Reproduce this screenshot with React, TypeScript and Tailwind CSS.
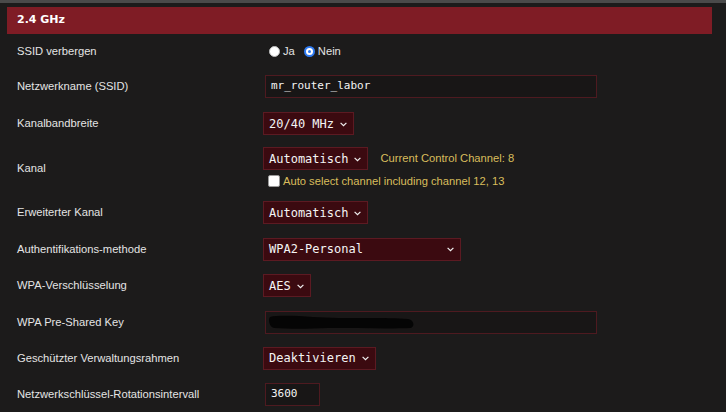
import React from "react";

const mono = { fontFamily: '"DejaVu Sans Mono", "Liberation Mono", monospace' };

function Chevron() {
  return (
    <svg width="7" height="5" viewBox="0 0 7 5" className="ml-[6px] mt-[1px] shrink-0">
      <polyline points="0.6,0.8 3.5,3.7 6.4,0.8" fill="none" stroke="#f2f2f2" strokeWidth="1.2" />
    </svg>
  );
}

function Select({ value, wide }: { value: string; wide?: boolean }) {
  return (
    <div
      className={
        "h-[23px] border border-[#5c1a22] bg-[#3b0a10] flex items-center pl-[5px] pr-[6px] text-[12px] text-[#f4f4f4] " +
        (wide ? "w-[198px] justify-between pr-[5px]" : "")
      }
      style={mono}
    >
      <span className="whitespace-pre leading-none">{value}</span>
      <Chevron />
    </div>
  );
}

function TextInput({ children, w }: { children: React.ReactNode; w: string }) {
  return (
    <div
      className={"ml-[2px] h-[23px] border border-[#4e1a20] bg-[#181616] flex items-center pl-[5px] text-[11px] text-[#f4f4f4] " + w}
      style={mono}
    >
      {children}
    </div>
  );
}

function Row({ label, h, children, top }: { label: string; h: string; children: React.ReactNode; top?: boolean }) {
  return (
    <div className={"flex " + h}>
      <div className="w-[256px] pl-[10px] flex items-center text-[11.2px] text-[#e4e4e4]">{label}</div>
      <div className={"flex " + (top ? "flex-col pt-[5px]" : "items-center")}>{children}</div>
    </div>
  );
}

export default function App() {
  return (
    <div
      className="w-[726px] h-[412px] overflow-hidden bg-[#1c1b1b]"
      style={{ fontFamily: '"Liberation Sans", Arial, sans-serif' }}
    >
      <div className="h-[3px] bg-[#4a4a4a]" />
      <div className="pl-[7px] pt-[4px]">
        <div
          className="h-[27px] w-[705px] bg-[#7f1c25] flex items-center pl-[10px] text-[11px] font-bold text-white"
          style={{ fontFamily: '"DejaVu Sans", Verdana, sans-serif' }}
        >
          2.4 GHz
        </div>

        <Row label="SSID verbergen" h="h-[34px]">
          <span className="ml-[6px] w-[11px] h-[11px] rounded-full bg-white border border-[#bdbdbd]" />
          <span className="ml-[3px] text-[11.2px] text-[#e4e4e4]">Ja</span>
          <span className="ml-[9px] w-[11px] h-[11px] rounded-full bg-white border-[2px] border-[#2f7bf2] flex items-center justify-center">
            <span className="w-[3px] h-[3px] rounded-full bg-[#2f7bf2]" />
          </span>
          <span className="ml-[3px] text-[11.2px] text-[#e4e4e4]">Nein</span>
        </Row>

        <Row label="Netzwerkname (SSID)" h="h-[37px]">
          <TextInput w="w-[332px]">mr_router_labor</TextInput>
        </Row>

        <Row label="Kanalbandbreite" h="h-[37px]">
          <Select value="20/40 MHz" />
        </Row>

        <Row label="Kanal" h="h-[52px]" top>
          <div className="flex items-center">
            <Select value="Automatisch" />
            <span className="ml-[12px] text-[11.2px] text-[#d9bd5c]">Current Control Channel: 8</span>
          </div>
          <div className="mt-[4px] h-[14px] flex items-center">
            <span className="ml-[5px] w-[12px] h-[12px] bg-white rounded-[2px] border border-[#9a9a9a]" />
            <span className="ml-[3px] text-[11.2px] text-[#d9bd5c]">Auto select channel including channel 12, 13</span>
          </div>
        </Row>

        <Row label="Erweiterter Kanal" h="h-[37px]">
          <Select value="Automatisch" />
        </Row>

        <Row label="Authentifikations-methode" h="h-[36px]">
          <Select value="WPA2-Personal" wide />
        </Row>

        <Row label="WPA-Verschlüsselung" h="h-[37px]">
          <Select value="AES" />
        </Row>

        <Row label="WPA Pre-Shared Key" h="h-[36px]">
          <TextInput w="w-[332px]">
            <svg width="148" height="18" viewBox="0 0 148 18" className="-ml-[3px]">
              <path
                d="M2,4 C10,2 30,3 45,4 C60,5 80,5 100,5 C115,5 130,5 140,6 C146,7 147,13 143,15 C120,16 90,15 60,15 C40,16 20,16 6,15 C1,14 0,6 2,4 Z"
                fill="#050505"
              />
            </svg>
          </TextInput>
        </Row>

        <Row label="Geschützter Verwaltungsrahmen" h="h-[36px]">
          <Select value="Deaktivieren" />
        </Row>

        <Row label="Netzwerkschlüssel-Rotationsintervall" h="h-[36px]">
          <TextInput w="w-[55px]">3600</TextInput>
        </Row>
      </div>
    </div>
  );
}
